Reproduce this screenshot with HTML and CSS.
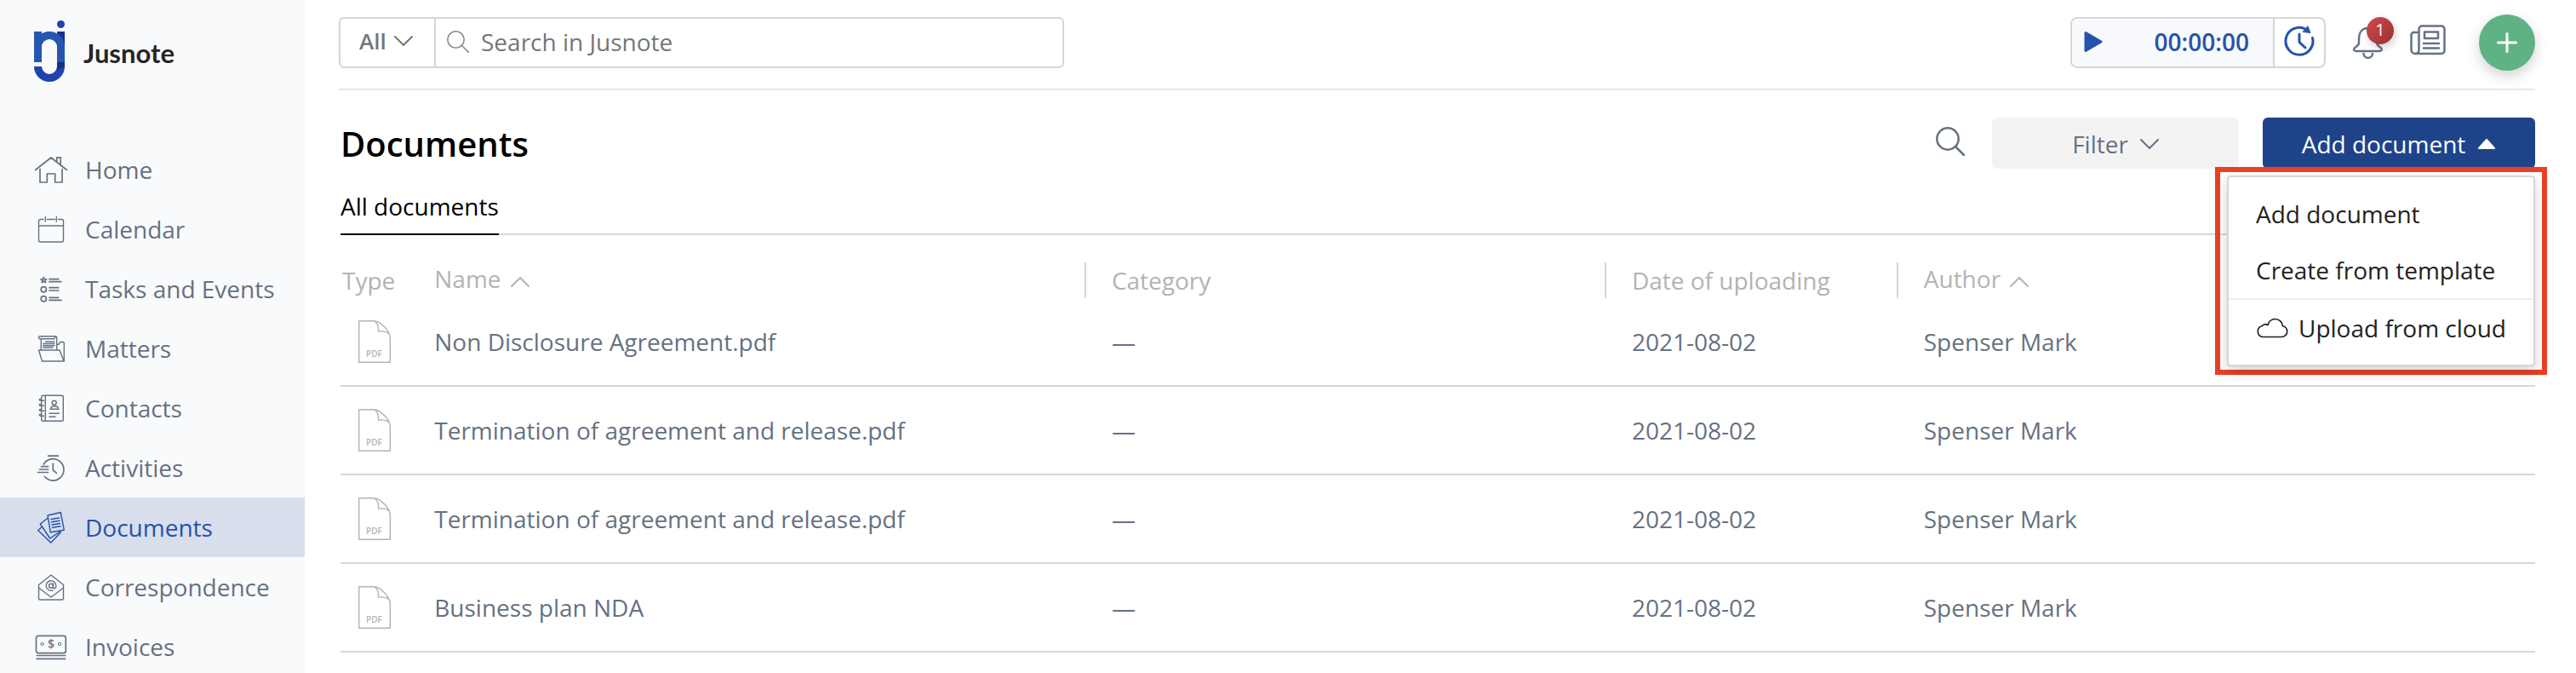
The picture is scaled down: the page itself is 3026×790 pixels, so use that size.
FILE: index.html
```html
<!DOCTYPE html>
<html lang="en">
<head>
<meta charset="utf-8">
<meta name="viewport" content="width=device-width, initial-scale=1">
<title>Documents – Jusnote</title>
<link rel="stylesheet" href="styles.css">
</head>
<body>
<svg class="sprite" aria-hidden="true">
  <symbol id="page" viewBox="0 0 38 50">
    <path d="M.7.7H18C26 .7 37.3 13 37.3 21V49.300H.7Z M18 .7C23 3 23.500 7 23.500 13C29 12.500 33 13 35.500 15.500"/>
  </symbol>
  <symbol id="down" viewBox="0 0 22 14"><path d="M1 2L11 12L21 2"/></symbol>
  <symbol id="up" viewBox="0 0 22 14"><path d="M1 12L11 2L21 12"/></symbol>
</svg>

<div class="app">
  <aside class="sidebar">
    <a class="brand" href="#">
      <svg class="brand-mark" viewBox="0 0 36 72" aria-hidden="true">
        <circle cx="31.500" cy="4.500" r="4.500" fill="#1d43ae"/>
        <path d="M27 13H36V54A18 18 0 0 1 0 54H9A9 9 0 0 0 27 54Z" fill="#1d43ae"/>
        <path d="M27 13H36V28Z" fill="#17338f"/>
        <path d="M27 49H36V54L27 58Z" fill="#142f86"/>
        <path d="M0 13H9V15.500C12 13.500 15 13 18 13A18 18 0 0 1 36 31V49H27V31A9 9 0 0 0 9 31V49H0Z" fill="#2557ae"/>
      </svg>
      <span>Jusnote</span>
    </a>
    <nav class="nav">
      <a href="#"><svg class="icon" viewBox="0 0 40 40"><path d="M1.500 20.500L20 6L38.500 20.500M7 19.500V35H15.300V25H24.700V35H33V19.500M26.800 10.500V5.800H31.200V14"/></svg>Home</a>
      <a href="#"><svg class="icon thin" viewBox="0 0 40 40"><path d="M11 8.500H7.500A2 2 0 0 0 5.500 10.500V33A2 2 0 0 0 7.500 35H32.500A2 2 0 0 0 34.500 33V10.500A2 2 0 0 0 32.500 8.500H28.500M15.500 8.500H24.500M5.500 16H34.500M13.300 5.500V11M26.300 5.500V11"/></svg>Calendar</a>
      <a href="#"><svg class="icon" viewBox="0 0 40 40"><path d="M18 8.700H28.700M18 11.700H32M18 18.700H28.700M18 22H28.700M18 30.300H28.700M18 33.300H32"/><circle cx="11.300" cy="20.700" r="3.100"/><circle cx="11.300" cy="31.700" r="3.100"/><path d="M11.300 6.500L12.200 8.700L14.600 8.800L12.700 10.300L13.400 12.600L11.300 11.300L9.200 12.600L9.900 10.300L8 8.800L10.400 8.700Z"/></svg>Tasks and Events</a>
      <a href="#"><svg class="icon thin" viewBox="0 0 40 40"><path d="M5.500 22H30L35 35H9.500ZM8.300 22V8.500M26.700 22V7C26.700 6 26 5.700 25 5.700H6.500C5 6 5 8.500 6.500 8.700H23.500C24.500 8.500 24.700 7.500 24.500 5.700M26.700 15.300H29.300L30.300 12.500H34C35 12.500 35.300 13 35.300 14V35M10.700 14.500H24M10.700 16.800H24M10.700 19H22M13.500 12.300H24"/></svg>Matters</a>
      <a href="#"><svg class="icon thin" viewBox="0 0 40 40"><rect x="8.700" y="5.300" width="25.600" height="30" rx="2"/><path d="M13.300 5.300V35.300M11.500 11.300H7.500C5.500 11 6 9 7.500 9.500M11.500 17.300H7.500C5.500 17 6 15 7.500 15.500M11.500 23.300H7.500C5.500 23 6 21 7.500 21.500M11.500 29.300H7.500C5.500 29 6 27 7.500 27.500M18 26.300H29.300M18 30.300H25M19.300 21.300H28.700C28.500 18.500 26.500 17.800 24 17.800S19.500 18.500 19.300 21.300Z"/><circle cx="23.700" cy="13.700" r="2.500"/></svg>Contacts</a>
      <a href="#"><svg class="icon" viewBox="0 0 40 40"><path d="M11.300 16A12.700 12.700 0 1 1 12.500 30.500M16.700 6.200H28.300M8.500 18.600H16.500M6.500 22H16.500M4.500 25.500H16.500M22.300 15V23L26.500 26.300"/></svg>Activities</a>
      <a href="#" class="active" aria-current="page"><svg class="icon thin" viewBox="0 0 40 40"><path d="M16 6L31.300 2.500L35.300 23.300L19.300 25.700ZM20 10.500L29.500 9M20.500 13.800L30 12.300M21 17L30.500 15.500M21.500 20.300L31 18.800M16.300 9L7.300 16L18.700 33L32 24.200M9.300 19.500L4.700 23.500L19.700 38L31 26.500"/></svg>Documents</a>
      <a href="#"><svg class="icon thin" viewBox="0 0 40 40"><path d="M5.500 17.500L20 6L34.500 17.500V33.500A1.500 1.500 0 0 1 33 35H7A1.500 1.500 0 0 1 5.500 33.500ZM5.500 21L20 32L34.500 21"/><circle cx="20" cy="18.700" r="2.500"/><path d="M22.500 16V20C22.500 22.500 26 22.500 25.800 18.500A5.800 5.800 0 1 0 22 24"/></svg>Correspondence</a>
      <a href="#"><svg class="icon" viewBox="0 0 40 40"><rect x="2.500" y="7.300" width="34.800" height="20.300" rx="2.500"/><path d="M3.300 30.500H36.700M3.300 34.300H36.700"/><circle class="fine" cx="9.500" cy="17" r="1.700"/><circle class="fine" cx="30" cy="17" r="1.700"/><text x="16" y="22" class="money">$</text></svg>Invoices</a>
    </nav>
  </aside>

  <div class="page">
    <header class="topbar">
      <form class="search" role="search">
        <label class="scope">
          <select aria-label="Search scope"><option>All</option></select>
          <svg class="chevron" aria-hidden="true"><use href="#down"/></svg>
        </label>
        <label class="query">
          <svg class="lens" viewBox="0 0 26 26" aria-hidden="true"><circle cx="10.500" cy="10.500" r="9.700"/><path d="M17 17L25.500 25.500"/></svg>
          <input type="search" placeholder="Search in Jusnote" aria-label="Search in Jusnote">
        </label>
      </form>
      <div class="tools">
        <div class="timer">
          <button class="timer-run" type="button">
            <svg class="play" viewBox="0 0 22 24" aria-hidden="true"><path d="M2 1.500L20 12L2 22.500Z"/></svg>
            <span>00:00:00</span>
          </button>
          <button class="timer-log" type="button" aria-label="Time log">
            <svg viewBox="0 0 36 36" aria-hidden="true"><path d="M33.500 14.500A16 16 0 1 1 25.500 4.200M18 10V19.500L25 26"/><path class="solid" d="M28 1L31 8.500L22.500 7.500Z"/></svg>
          </button>
        </div>
        <button class="bell" type="button" aria-label="Notifications">
          <svg viewBox="0 0 36 40" aria-hidden="true"><path d="M7 16C7 8 11 3 17.500 3S28 8 28 16V20C28 23 29.500 24 32 25.500C35 27.500 34 30 31 30H4C1 30 0 27.500 3 25.500C5.500 24 7 23 7 20ZM12.500 33C13 39.500 22.500 39.500 23 33"/></svg>
          <span class="badge">1</span>
        </button>
        <button class="news" type="button" aria-label="News">
          <svg viewBox="0 0 42 36" aria-hidden="true"><path d="M10.500 28V5A3.500 3.500 0 0 1 14 1.500H37A3.500 3.500 0 0 1 40.500 5V30.500A3.500 3.500 0 0 1 37 34H6A4.500 4.500 0 0 1 1.500 29.500V12A3 3 0 0 1 4.500 9H10.500V29.500A4.500 4.500 0 0 1 6 34M17 8.500H33V16H17ZM16 22H34M16 27.500H34"/></svg>
        </button>
        <button class="create" type="button" aria-label="Create">
          <svg viewBox="0 0 24 24" aria-hidden="true"><path d="M12 1.500V22.500M1.500 12H22.500"/></svg>
        </button>
      </div>
    </header>

    <main class="content">
      <div class="heading">
        <h1>Documents</h1>
        <div class="actions">
          <button class="find" type="button" aria-label="Search documents">
            <svg viewBox="0 0 34 34" aria-hidden="true"><circle cx="14" cy="14" r="12.700"/><path d="M23 23L33 33"/></svg>
          </button>
          <button class="filter" type="button">Filter <svg class="chevron" aria-hidden="true"><use href="#down"/></svg></button>
          <div class="add">
            <button class="add-button" type="button" aria-expanded="true">Add document <svg class="caret" viewBox="0 0 22 14" aria-hidden="true"><path d="M2 12L11 2L20 12Z"/></svg></button>
            <div class="highlight">
              <div class="menu">
                <a href="#">Add document</a>
                <a href="#">Create from template</a>
                <a href="#" class="cloud"><svg viewBox="0 0 38 24" aria-hidden="true"><path d="M8 22.500A6.500 6.500 0 0 1 7 9.800C9 7.500 11.500 7 14 8.500C15.500 3.500 19 1.500 22.500 1.500C27.500 1.500 31 5 31.300 9.500C34.500 10.300 36.700 13 36.700 16.200C36.700 19.700 34 22.500 30 22.500Z"/></svg>Upload from cloud</a>
              </div>
            </div>
          </div>
        </div>
      </div>

      <nav class="tabs"><a href="#" aria-current="page">All documents</a></nav>

      <table class="docs">
        <colgroup><col class="c-type"><col class="c-name"><col class="c-category"><col class="c-date"><col></colgroup>
        <thead>
          <tr>
            <th scope="col">Type</th>
            <th scope="col" class="sortable">Name <svg class="chevron" aria-hidden="true"><use href="#up"/></svg></th>
            <th scope="col" class="ruled">Category</th>
            <th scope="col" class="ruled">Date of uploading</th>
            <th scope="col" class="ruled sortable">Author <svg class="chevron" aria-hidden="true"><use href="#up"/></svg></th>
          </tr>
        </thead>
        <tbody>
          <tr><td><svg class="file" viewBox="0 0 38 50"><use href="#page"/><text x="9" y="43">PDF</text></svg></td><td>Non Disclosure Agreement.pdf</td><td class="inset">—</td><td class="inset">2021-08-02</td><td class="inset">Spenser Mark</td></tr>
          <tr><td><svg class="file" viewBox="0 0 38 50"><use href="#page"/><text x="9" y="43">PDF</text></svg></td><td>Termination of agreement and release.pdf</td><td class="inset">—</td><td class="inset">2021-08-02</td><td class="inset">Spenser Mark</td></tr>
          <tr><td><svg class="file" viewBox="0 0 38 50"><use href="#page"/><text x="9" y="43">PDF</text></svg></td><td>Termination of agreement and release.pdf</td><td class="inset">—</td><td class="inset">2021-08-02</td><td class="inset">Spenser Mark</td></tr>
          <tr><td><svg class="file" viewBox="0 0 38 50"><use href="#page"/><text x="9" y="43">PDF</text></svg></td><td>Business plan NDA</td><td class="inset">—</td><td class="inset">2021-08-02</td><td class="inset">Spenser Mark</td></tr>
        </tbody>
      </table>
    </main>
  </div>
</div>
</body>
</html>
```
FILE: styles.css
```css
:root {
  --slate: #667182;
  --blue: #2553ab;
  --line: #d6d6d6;
  --muted: #b3b3b3;
}

* { box-sizing: border-box; }

body {
  margin: 0;
  background: #fff;
  color: var(--slate);
  font: 400 28px/40px "Open Sans", "Noto Sans", sans-serif;
}

a { color: inherit; text-decoration: none; }

button, input, select {
  margin: 0;
  padding: 0;
  border: 0;
  background: none;
  color: inherit;
  font: inherit;
}

svg {
  display: block;
  flex: none;
  fill: none;
  stroke: currentColor;
  stroke-width: 2;
  stroke-linecap: round;
  stroke-linejoin: round;
}

.sprite { position: absolute; width: 0; height: 0; }

.app { display: flex; height: 100vh; overflow: hidden; }

/* Sidebar */
.sidebar {
  flex: none;
  width: 358px;
  padding-top: 24px;
  overflow: hidden;
  background: #f9fafc;
}

.brand {
  display: flex;
  align-items: center;
  gap: 22px;
  margin-bottom: 68px;
  padding-left: 40px;
  color: #262626;
  font: 700 31px/40px Lato, sans-serif;
}

.brand span { padding-top: 4px; }
.brand-mark { width: 36px; height: 72px; stroke: none; }

.nav a {
  display: flex;
  align-items: center;
  gap: 20px;
  height: 70px;
  padding-left: 40px;
}

.nav .active { background: #d8deec; color: var(--blue); }

.icon { width: 40px; height: 40px; stroke-width: 1.7; }
.icon.thin { stroke-width: 1.4; }
.icon .fine { stroke-width: 1; }
.money { fill: currentColor; stroke: none; font: 600 14px "Open Sans", sans-serif; }

/* Top bar */
.page { flex: 1; min-width: 0; padding: 0 48px 0 40px; }

.topbar {
  display: flex;
  align-items: center;
  justify-content: space-between;
  padding: 17px 0 21px;
  border-bottom: 2px solid #e4e9ec;
}

.search {
  display: flex;
  width: 852px;
  height: 60px;
  border: 2px solid var(--line);
  border-radius: 6px;
  color: #767676;
}

.scope {
  display: flex;
  flex: none;
  align-items: center;
  gap: 9px;
  width: 112px;
  padding: 0 0 4px 22px;
  border-right: 2px solid var(--line);
}

.scope select { appearance: none; font-size: 26px; font-weight: 600; }

.query { display: flex; flex: 1; align-items: center; gap: 14px; padding: 0 0 2px 13px; }
.query input { flex: 1; min-width: 0; outline: 0; }
.query input::placeholder { color: #767676; opacity: 1; }

.lens { width: 26px; height: 26px; stroke: #8a8a8a; stroke-width: 1.6; }
.chevron { width: 22px; height: 14px; }

.tools { display: flex; align-items: center; }

.timer {
  display: flex;
  width: 300px;
  height: 60px;
  margin-right: 32px;
  overflow: hidden;
  border: 2px solid var(--line);
  border-radius: 8px;
  color: var(--blue);
}

.timer-run {
  display: flex;
  flex: 1;
  align-items: center;
  justify-content: space-between;
  padding: 0 28px 2px 14px;
  border-right: 2px solid var(--line);
  background: #f8f9fc;
  font-weight: 600;
}

.play { width: 22px; height: 24px; fill: currentColor; stroke-width: 3; }
.timer-log { display: grid; place-items: center; width: 58px; padding-bottom: 4px; }
.timer-log svg { width: 36px; height: 36px; stroke-width: 3; }
.timer-log .solid { fill: currentColor; stroke-width: 1; }

.bell { position: relative; margin-right: 31px; }
.bell svg { width: 36px; height: 40px; stroke-width: 2.5; }

.badge {
  position: absolute;
  top: -10px;
  left: 16px;
  width: 32px;
  height: 32px;
  border-radius: 50%;
  background: linear-gradient(135deg, #d04a50, #9c3030);
  box-shadow: 2px 4px 10px rgb(0 0 0 / 18%);
  color: #fff;
  font: 400 20px/30px "Open Sans", sans-serif;
  text-align: center;
}

.news { margin-right: 39px; padding-bottom: 6px; }
.news svg { width: 42px; height: 36px; stroke-width: 2.5; }

.create {
  display: grid;
  place-items: center;
  width: 66px;
  height: 66px;
  border-radius: 50%;
  background: #5fb283;
  box-shadow: 0 6px 16px rgb(0 0 0 / 18%);
  color: #fff;
}

.create svg { width: 24px; height: 24px; stroke-width: 3; }

/* Content */
.content { padding: 32px 0 0 2px; }

.heading, .actions { display: flex; align-items: center; }
.heading { justify-content: space-between; }

h1 { margin: 0; padding-top: 2px; color: #000; font-size: 40px; font-weight: 600; line-height: 58px; }

.find { margin-right: 32px; padding-bottom: 4px; }
.find svg { width: 34px; height: 34px; stroke-width: 2.5; }

.filter, .add-button {
  display: flex;
  align-items: center;
  justify-content: center;
  gap: 14px;
  height: 60px;
  padding-top: 2px;
  border-radius: 6px;
}

.filter { width: 290px; margin-right: 28px; background: #f3f3f3; }

.add { position: relative; }
.add-button { width: 320px; background: #1f4389; color: #fff; }
.caret { width: 22px; height: 14px; fill: currentColor; }

.highlight {
  position: absolute;
  z-index: 1;
  top: 58px;
  right: -14px;
  padding: 4px 8px;
  border: 6px solid #ea4025;
}

.menu {
  width: 362px;
  padding: 10px 0;
  border: 2px solid var(--line);
  border-radius: 4px;
  background: #fff;
  box-shadow: 0 6px 16px rgb(0 0 0 / 18%);
  color: #222;
}

.menu a { display: flex; align-items: center; height: 66px; padding-left: 32px; }
.menu .cloud { gap: 12px; height: 68px; border-top: 2px solid #eee; }
.cloud svg { width: 38px; height: 24px; stroke-width: 1.7; }

.tabs { display: flex; margin-top: 24px; border-bottom: 2px solid var(--line); }
.tabs a { margin-bottom: -2px; padding-bottom: 12px; border-bottom: 2px solid #000; color: #000; }

/* Documents table */
.docs {
  width: 100%;
  margin-top: 32px;
  border-spacing: 0;
  table-layout: fixed;
}

.c-type { width: 4.2%; }
.c-name { width: 29.7%; }
.c-category { width: 23.7%; }
.c-date { width: 13.3%; }

.docs th {
  height: 42px;
  padding: 0 0 0 2px;
  color: var(--muted);
  font-weight: 400;
  line-height: 38px;
  text-align: left;
}

.docs th.ruled { padding-left: 30px; border-left: 2px solid var(--line); }
.docs th.sortable { padding-bottom: 4px; }
.docs th .chevron { display: inline-block; margin-left: 4px; }

.docs td { height: 104px; padding: 0 0 0 2px; border-bottom: 2px solid var(--line); }
.docs td.inset { padding-left: 32px; }

.file { width: 38px; height: 50px; margin-left: 19px; stroke: var(--muted); stroke-width: 1.4; }
.file text { fill: var(--muted); stroke: none; font: 600 10px "Open Sans", sans-serif; }
```
